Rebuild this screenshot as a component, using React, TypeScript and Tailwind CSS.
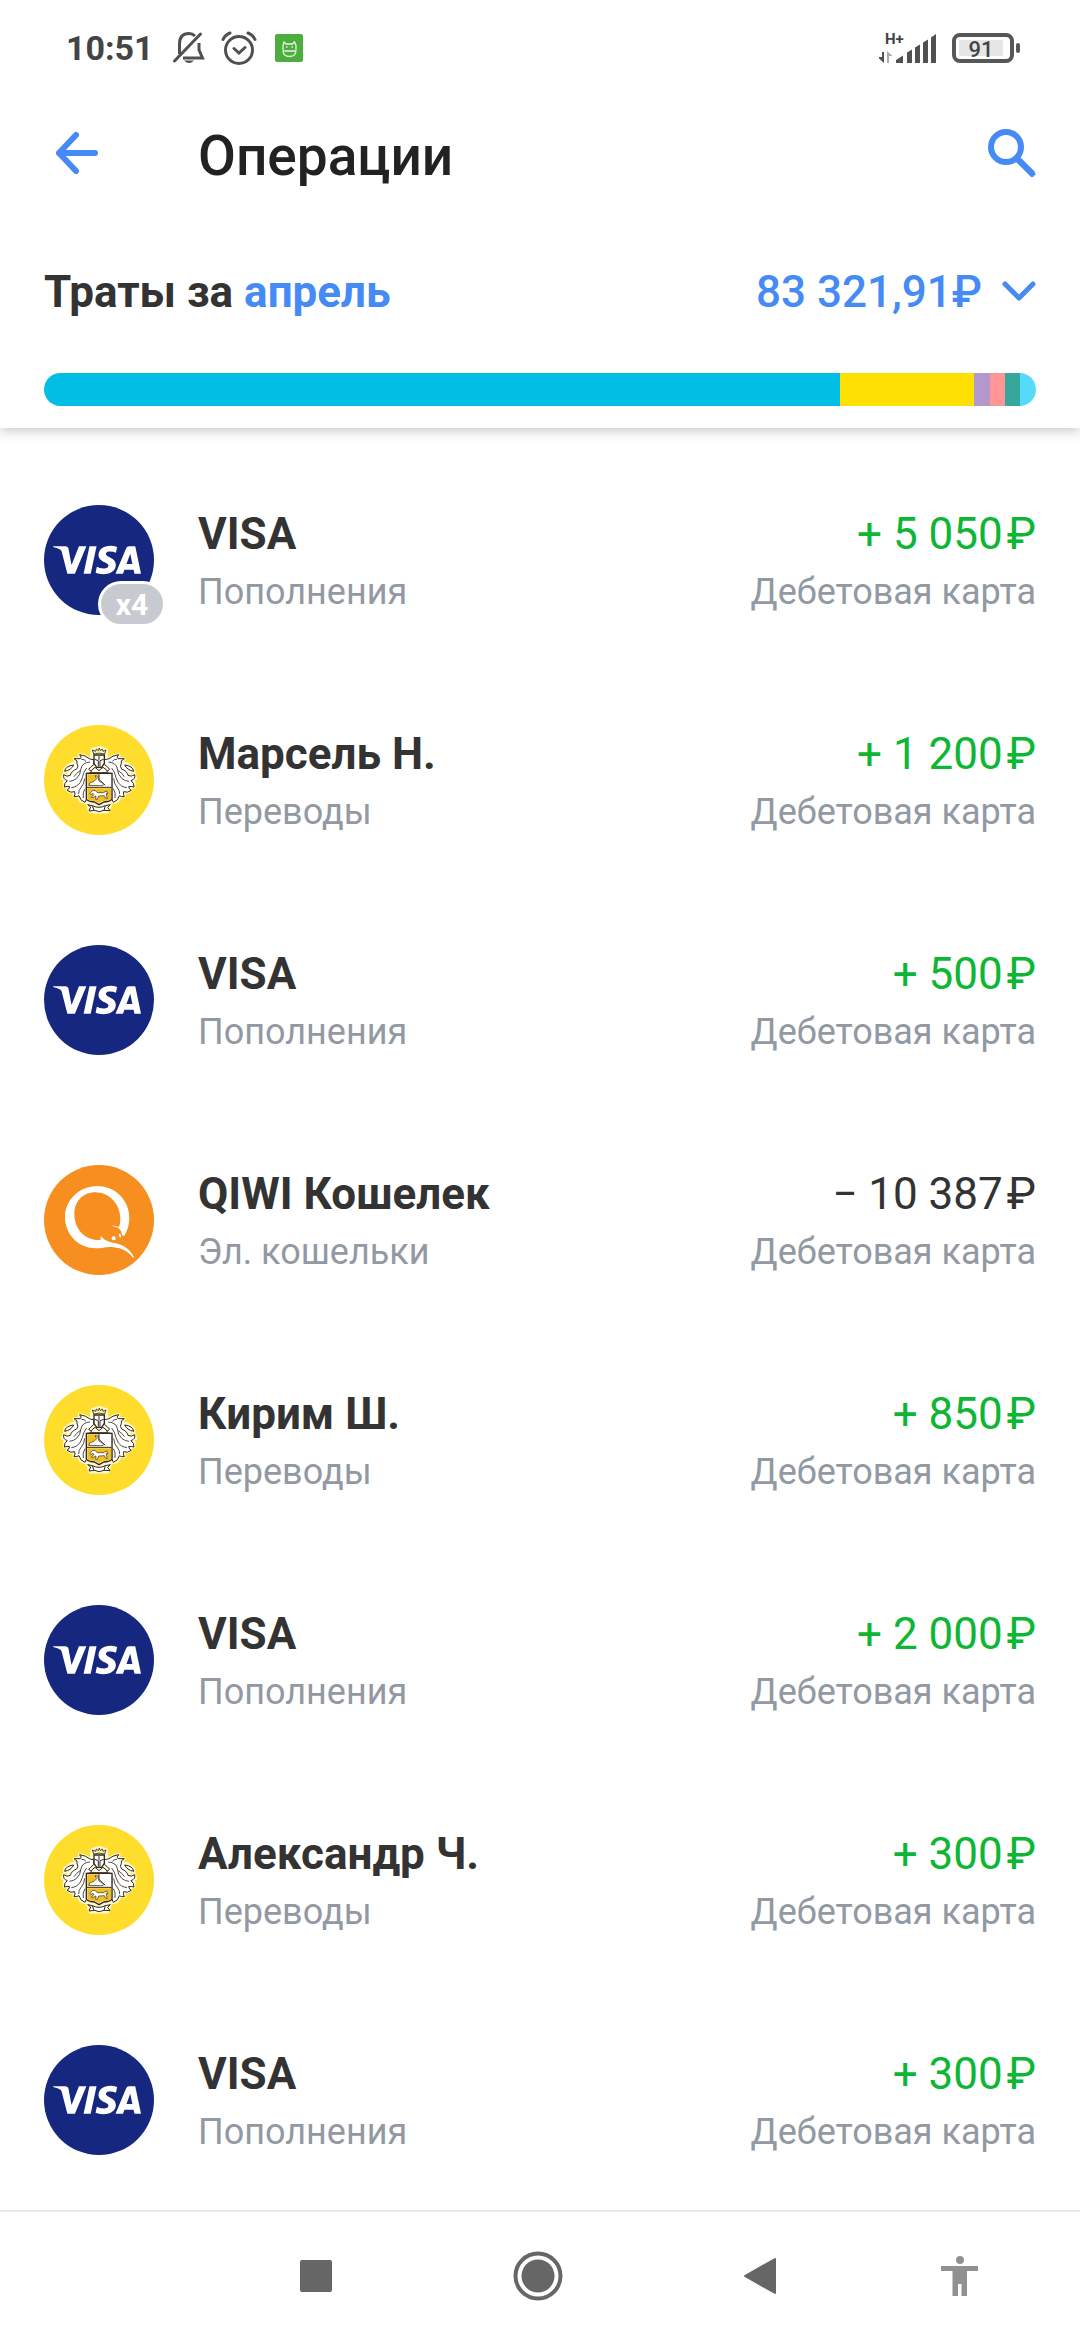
import type { ReactNode } from "react";
import { SiVisa } from "react-icons/si";

type Kind = "visa" | "bank" | "qiwi";

interface Operation {
  kind: Kind;
  title: string;
  category: string;
  sign: "+" | "−";
  amount: string;
  count?: number;
}

const operations: Operation[] = [
  { kind: "visa", title: "VISA", category: "Пополнения", sign: "+", amount: "5 050", count: 4 },
  { kind: "bank", title: "Марсель Н.", category: "Переводы", sign: "+", amount: "1 200" },
  { kind: "visa", title: "VISA", category: "Пополнения", sign: "+", amount: "500" },
  { kind: "qiwi", title: "QIWI Кошелек", category: "Эл. кошельки", sign: "−", amount: "10 387" },
  { kind: "bank", title: "Кирим Ш.", category: "Переводы", sign: "+", amount: "850" },
  { kind: "visa", title: "VISA", category: "Пополнения", sign: "+", amount: "2 000" },
  { kind: "bank", title: "Александр Ч.", category: "Переводы", sign: "+", amount: "300" },
  { kind: "visa", title: "VISA", category: "Пополнения", sign: "+", amount: "300" },
];

const spending = [
  { share: 796, color: "bg-[#00bee4]" },
  { share: 134, color: "bg-[#fee102]" },
  { share: 16, color: "bg-[#b398cd]" },
  { share: 15, color: "bg-[#ff9595]" },
  { share: 15, color: "bg-[#36a79b]" },
  { share: 16, color: "bg-[#56dafa]" },
];

function StatusBar() {
  return (
    <div className="flex h-24 items-center justify-between pr-[60px] pl-[66px] text-[#444]">
      <div className="flex items-center">
        <span className="w-[88px] text-[34px] font-bold">10:51</span>
        <svg className="ml-[18px] h-[34px] w-[34px]" viewBox="0 0 34 34" fill="none" stroke="#505050" strokeWidth="3">
          <path d="M7.500 23V13Q7.500 2.500 17 2.500Q20.500 2.500 23 5M27 12V19L30.500 27H11" />
          <path d="M2.500 30L28.500 3" strokeLinecap="round" />
          <path d="M12 29.500H22Q17 34.500 12 29.500Z" fill="#505050" stroke="none" />
        </svg>
        <svg className="ml-[14px] h-[36px] w-[38px]" viewBox="0 0 38 36" fill="none" stroke="#505050" strokeWidth="3" strokeLinecap="round">
          <circle cx="19" cy="20" r="13.500" />
          <path d="M14 18.500L19 23L25 17.500M3 9.500Q5 5 10 3M28 3Q33 5 35 9.500" />
        </svg>
        <svg className="ml-[17px] h-7 w-7" viewBox="0 0 28 28" fill="none">
          <rect width="28" height="28" rx="2" fill="#4cae3c" />
          <path d="M7.500 17H21.500M8 16V11.500L9 8L11 10H17.500L19.500 8L21 11.500V16M8 17Q8.500 22.500 14.500 22.500T21 17M11 13H12.500M16.500 13H18" stroke="#e5f6df" strokeWidth="1.300" />
        </svg>
      </div>
      <div className="flex items-center">
        <div className="relative">
          <span className="absolute -top-[1px] left-[6px] text-[15px] leading-4 font-bold">H+</span>
          <svg className="h-8 w-[58px]" viewBox="0 0 58 32" fill="#505050">
            <path d="M3 20H5V31L0 26.500V25H3Z" />
            <path d="M8 31V19L13.500 24H10V31Z" fill="#aaa" />
            <path d="M17 31V28L24 23.500V31ZM28 31V20.500L33 17.500V31ZM36 31V15.500L41 12.500V31ZM44 31V10.500L49 7.500V31ZM52 31V5.500L57 2V31Z" />
          </svg>
        </div>
        <div className="ml-[15px] flex h-[30px] w-[62px] items-center rounded-[8px] border-4 border-[#575757] p-[3px]">
          <span className="flex h-4 w-11 items-center justify-center bg-[#e6e6e6] pt-[3px] text-[22px] font-medium">91</span>
        </div>
        <div className="ml-[2px] h-[10px] w-1 rounded-full bg-[#575757]" />
      </div>
    </div>
  );
}

function BankEmblem() {
  const half = (
    <g strokeLinejoin="round">
      <path
        d="M190 188L174 178L183 160L192 148L178 146L166 138L148 134L151 145L132 146L140 158L122 162L104 176L103 185L122 184L112 198L101 194L98 205L112 212L103 217L103 230L116 230L112 241L122 247L134 247L132 260L145 259L152 273L165 278L172 266Z"
        fill="#fff"
        stroke="#fff8cf"
        strokeWidth="9"
      />
      <path
        d="M190 188L176 178Q182 170 191 164L192 148Q187 150 178 146Q168 137 149 134Q157 143 151 146L132 146Q145 152 141 160Q147 170 140 177Q124 183 121 196Q111 202 101 194Q98 207 112 212Q102 219 103 231Q112 228 119 230Q118 238 111 241Q123 250 134 245Q137 253 132 260Q142 261 147 257Q150 272 165 277L170 266V190Z"
        fill="#fff"
        stroke="#30291b"
        strokeWidth="3"
      />
      <path d="M104 184Q106 168 131 165Q124 180 104 184Z" fill="#fff" stroke="#30291b" strokeWidth="3" />
      <path
        d="M180 156Q156 158 153 176Q152 194 139 206Q130 213 118 214M170 174Q160 186 157 203Q152 221 140 228Q132 232 124 233M150 182Q138 190 132 200M164 205Q163 223 152 234Q146 240 146 252M165 236Q157 248 160 264M154 148Q163 147 168 154"
        fill="none"
        stroke="#30291b"
        strokeWidth="2.500"
      />
    </g>
  );
  return (
    <svg className="h-full w-full" viewBox="42 45 330 330" aria-hidden="true">
      <path d="M173 284L186 119L208 112L229 119L241 284L233 306H180Z" fill="#fff8cf" stroke="#fff8cf" strokeWidth="9" strokeLinejoin="round" />
      {half}
      <g transform="translate(415 0) scale(-1 1)">{half}</g>
      <path d="M169 190H246V266Q245 274 222 276L207 284L193 276Q170 274 169 266Z" fill="#fff" stroke="#30291b" strokeWidth="4" />
      <path d="M172 193H207V229H172ZM172 235H243V266Q243 271 219 273L207 279L194 273Q172 271 172 266Z" fill="#eebf21" />
      <path d="M171 232H244M207 193V208L226 226" fill="none" stroke="#30291b" strokeWidth="3" />
      <path d="M177 226L179 219L192 214L200 206L195 197L203 199L207 213L220 221L219 227Z" fill="#fff" stroke="#30291b" strokeWidth="2" strokeLinejoin="round" />
      <path
        d="M180 250L188 241L196 242L202 248H220L230 243L233 252L228 251L232 265H227L223 257L206 258L202 268H197L198 258L190 262L184 262L191 254L189 250L182 254Z"
        fill="#fff"
        stroke="#30291b"
        strokeWidth="2"
        strokeLinejoin="round"
      />
      <path d="M182 188Q184 178 195 172L207 182L219 172Q231 178 233 188Z" fill="#fff" stroke="#30291b" strokeWidth="3" />
      <path d="M192 135V160L200 172H215L223 160V135Z" fill="#fff" stroke="#30291b" strokeWidth="4" />
      <path d="M194 148L205 152V170M221 148L210 152V170M207 138V150" stroke="#30291b" strokeWidth="3" fill="none" />
      <path d="M191 132L187 120L197 124L199 117L205 122L208 114L211 122L217 117L219 124L228 120L224 132Q207 127 191 132Z" fill="#fff3a0" stroke="#30291b" strokeWidth="2.500" />
      <path d="M173 284L182 291L177 303L194 301Q207 309 222 301L240 302L233 292L241 284L226 287Q207 297 187 287Z" fill="#fff" stroke="#30291b" strokeWidth="3" />
      <path d="M187 287L192 301M226 287L222 301" stroke="#30291b" strokeWidth="3" />
    </svg>
  );
}

function QiwiLogo() {
  return (
    <svg className="h-full w-full" viewBox="42 45 330 330" fill="#fff" aria-hidden="true">
      <path d="M283 257C293 241 298 222 298 203C298 150 255 108 202 108C148 108 105 150 105 202C105 256 148 296 200 295C216 295 226 290 245 291C275 293 295 305 309 323L312 322C302 300 283 285 255 279C240 276 224 273 212 257C213 262 212 268 211 270C162 272 133 235 133 192C133 153 160 127 196 127C240 127 271 165 271 205Q271 221 267 232Q257 225 243 228C262 228 276 239 276 256Z" />
      <circle cx="251" cy="265" r="6" />
      <ellipse cx="270" cy="257" rx="3" ry="6" transform="rotate(-20 270 257)" />
    </svg>
  );
}

function Avatar({ kind, count }: { kind: Kind; count?: number }) {
  const styles: Record<Kind, string> = {
    visa: "bg-[#15277f]",
    bank: "bg-[#ffdd2d]",
    qiwi: "bg-[#f68f1f]",
  };
  const logos: Record<Kind, ReactNode> = {
    visa: <SiVisa className="mr-1 size-[88px] text-white" aria-hidden="true" />,
    bank: <BankEmblem />,
    qiwi: <QiwiLogo />,
  };
  return (
    <div className="relative size-[110px] shrink-0">
      <div className={`flex size-full items-center justify-center rounded-full ${styles[kind]}`}>{logos[kind]}</div>
      {count && (
        <span className="absolute -right-3 -bottom-3 flex h-[46px] w-[68px] items-center justify-center rounded-full border-3 border-white bg-[#c7cad0] text-[30px] font-bold text-white">
          x{count}
        </span>
      )}
    </div>
  );
}

function OperationRow({ op }: { op: Operation }) {
  return (
    <li>
      <button type="button" className="flex h-[220px] w-full items-center px-11 text-left">
        <Avatar kind={op.kind} count={op.count} />
        <span className="ml-11 flex min-w-0 flex-1 flex-col gap-1 pt-[6px]">
          <span className="text-[44px] leading-[54px] font-bold text-[#333]">{op.title}</span>
          <span className="text-[36px] leading-[54px] text-[#9299a2]">{op.category}</span>
        </span>
        <span className="flex flex-col items-end gap-1 pt-[6px]">
          <span className={`flex gap-1 text-[44px] leading-[54px] ${op.sign === "+" ? "text-[#0db634]" : "text-[#333]"}`}>
            <span>
              {op.sign} {op.amount}
            </span>
            <span>₽</span>
          </span>
          <span className="text-[36px] leading-[54px] text-[#9299a2]">Дебетовая карта</span>
        </span>
      </button>
    </li>
  );
}

export default function App() {
  return (
    <div className="flex min-h-screen flex-col bg-white font-['Roboto',sans-serif]">
      <header className="relative bg-white pb-[22px] shadow-[0_2px_12px_rgba(0,0,0,0.25)]">
        <StatusBar />
        <div className="flex h-[114px] items-center px-11">
          <button type="button" aria-label="Назад" className="flex w-[154px] pl-[11px]">
            <svg className="h-11 w-11" viewBox="0 0 44 44" fill="none" stroke="#468af5" strokeWidth="6" strokeLinecap="round" strokeLinejoin="round">
              <path d="M40 22H4L21 4M4 22L21 40" />
            </svg>
          </button>
          <h1 className="flex-1 pt-[6px] text-[55px] font-medium text-[#222]">Операции</h1>
          <button type="button" aria-label="Поиск">
            <svg className="h-12 w-12" viewBox="0 0 48 48" fill="none" stroke="#468af5" strokeWidth="6">
              <circle cx="18" cy="18" r="15" />
              <path d="M28 29L46 47" strokeWidth="5.500" />
              <path d="M29 29L45 45" strokeWidth="6" />
            </svg>
          </button>
        </div>
        <div className="flex h-[163px] items-center justify-between px-11">
          <h2 className="text-[44px] font-bold text-[#333]">
            Траты за{" "}
            <button type="button" className="text-[#468af5]">
              апрель
            </button>
          </h2>
          <button type="button" className="flex items-center gap-5 text-[44px] font-medium text-[#468af5]">
            83 321,91₽
            <svg className="h-6 w-[34px]" viewBox="0 0 34 24" fill="none" stroke="#468af5" strokeWidth="5" strokeLinecap="round" strokeLinejoin="round">
              <path d="M3 4L17 18L31 4" />
            </svg>
          </button>
        </div>
        <div className="mx-11 flex h-[33px] overflow-hidden rounded-full">
          {spending.map((part) => (
            <div key={part.color} className={part.color} style={{ flexGrow: part.share }} />
          ))}
        </div>
      </header>
      <main className="flex-1 pt-[22px]">
        <ul>
          {operations.map((op, i) => (
            <OperationRow key={i} op={op} />
          ))}
        </ul>
      </main>
      <nav className="grid h-[130px] grid-cols-[5fr_5fr_5fr_4fr] items-center border-t-2 border-[#e8e8e8] pr-[31px] pl-[205px]">
        <button type="button" aria-label="Недавние" className="flex justify-center">
          <span className="size-8 rounded-[2px] bg-[#666]" />
        </button>
        <button type="button" aria-label="Домой" className="flex justify-center">
          <svg className="size-[50px]" viewBox="0 0 50 50">
            <circle cx="25" cy="25" r="22.500" fill="none" stroke="#666" strokeWidth="4" />
            <circle cx="25" cy="25" r="16.500" fill="#666" />
          </svg>
        </button>
        <button type="button" aria-label="Назад" className="flex justify-center">
          <svg className="h-9 w-8" viewBox="0 0 32 36" fill="#666" stroke="#666" strokeWidth="2" strokeLinejoin="round">
            <path d="M1 18L31 1V35Z" />
          </svg>
        </button>
        <button type="button" aria-label="Специальные возможности" className="flex justify-center">
          <svg className="h-[42px] w-[38px]" viewBox="0 0 38 42" fill="#919191">
            <circle cx="19" cy="5" r="4" />
            <path d="M0 11H37V16H26V41H20.500V29H17V41H11.500V16H0Z" />
          </svg>
        </button>
      </nav>
    </div>
  );
}
